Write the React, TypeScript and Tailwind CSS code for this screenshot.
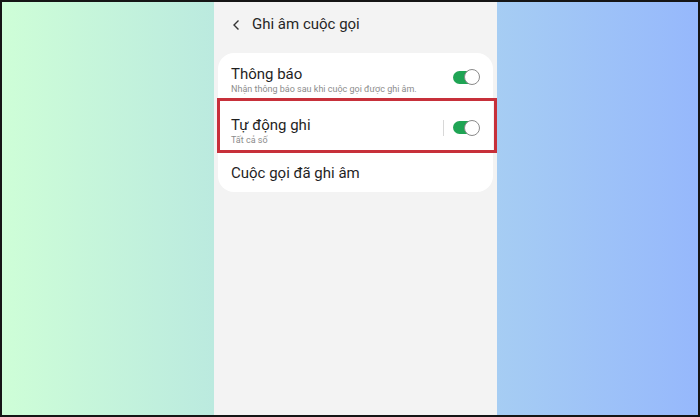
import React from "react";

function Toggle() {
  return (
    <div className="relative w-[27px] h-[16px] flex items-center">
      <div className="w-[25px] h-[13px] rounded-full bg-[#1fa454]" />
      <div className="absolute right-0 top-0 w-[16px] h-[16px] rounded-full bg-white border-[1.5px] border-[#8a8a8a]" />
    </div>
  );
}

export default function App() {
  return (
    <div
      className="w-[700px] h-[417px] border-2 border-[#151515] flex overflow-hidden"
      style={{ fontFamily: "Roboto, 'Noto Sans', sans-serif" }}
    >
      <div className="w-[212px] h-full bg-gradient-to-r from-[#cefed7] to-[#bbeadf]" />
      <div className="w-[283px] h-full bg-[#f3f3f3] flex flex-col">
        <div className="h-[50px] flex items-center pl-[16px] pb-[2px] text-[#262626]">
          <svg width="14" height="14" viewBox="0 0 14 14" className="mt-[-2px]">
            <path d="M8.5 2.5 L4 7 L8.5 11.5" fill="none" stroke="#333" strokeWidth="1.4" />
          </svg>
          <span className="ml-[8px] text-[15px] mt-[-3px]">Ghi âm cuộc gọi</span>
        </div>
        <div className="ml-[4px] mr-[4px] mt-[1px] bg-white rounded-[16px] text-[#1f1f1f]">
          <div className="h-[45px] flex items-center pl-[13px] pr-[13px]">
            <div className="flex-1 flex flex-col mt-[9px]">
              <span className="text-[15px] leading-[17px]">Thông báo</span>
              <span className="text-[9px] leading-[12px] text-[#8c8c8c]">
                Nhận thông báo sau khi cuộc gọi được ghi âm.
              </span>
            </div>
            <div className="mt-[3px]">
              <Toggle />
            </div>
          </div>
          <div className="relative h-[55px] flex items-center pl-[13px] pr-[13px]">
            <div className="flex-1 flex flex-col mt-[10px]">
              <span className="text-[15px] leading-[18px]">Tự động ghi</span>
              <span className="text-[9px] leading-[12px] text-[#8c8c8c]">Tất cả số</span>
            </div>
            <div className="w-px h-[16px] bg-[#d8d8d8] mr-[9px] mt-[4px]" />
            <div className="mt-[4px]">
              <Toggle />
            </div>
            <div className="absolute left-[-1px] right-[-4px] top-0 bottom-0 border-[3px] border-[#c7303a]" />
          </div>
          <div className="h-[39px] flex items-center pl-[13px]">
            <span className="text-[15px] leading-[18px] mt-[1px]">Cuộc gọi đã ghi âm</span>
          </div>
        </div>
      </div>
      <div className="flex-1 h-full bg-gradient-to-r from-[#a6cdf3] to-[#96b8fc]" />
    </div>
  );
}
